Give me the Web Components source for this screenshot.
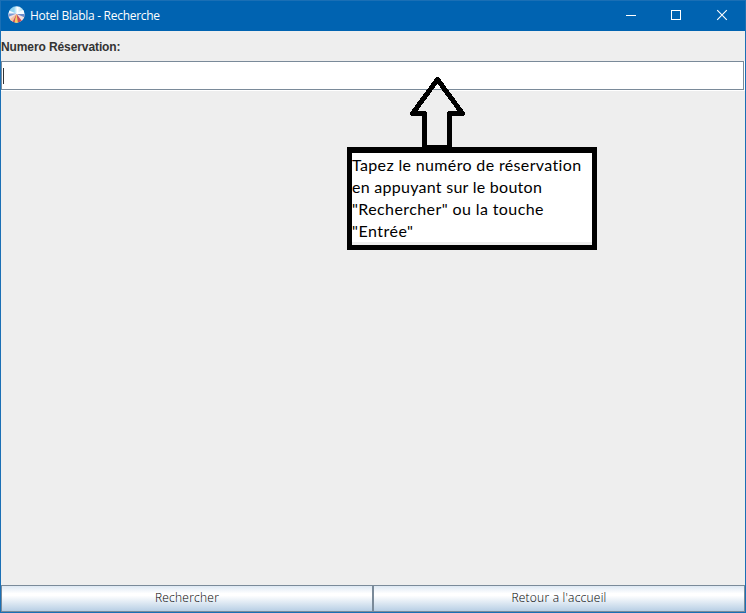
<!DOCTYPE html>
<html lang="fr">
<head>
<meta charset="utf-8">
<title>Hotel Blabla - Recherche</title>
<style>
html, body { margin: 0; height: 100%; overflow: hidden; }
help-callout span:nth-child(1) { letter-spacing: .35px; }
help-callout span:nth-child(2) { letter-spacing: .27px; }
help-callout span:nth-child(3) { letter-spacing: .4px; }
help-callout span:nth-child(4) { letter-spacing: .5px; }
</style>
</head>
<body>
<app-window>
  <title-bar slot="title">Hotel Blabla - Recherche</title-bar>
  <search-field>Numero Réservation:</search-field>
  <help-callout>
    <span>Tapez le numéro de réservation</span>
    <span>en appuyant sur le bouton</span>
    <span>"Rechercher" ou la touche</span>
    <span>"Entrée"</span>
  </help-callout>
  <metal-button slot="actions">Rechercher</metal-button>
  <metal-button slot="actions">Retour a l'accueil</metal-button>
</app-window>
<script>
function define(name, markup) {
  customElements.define(name, class extends HTMLElement {
    constructor() {
      super();
      this.attachShadow({ mode: "open" }).innerHTML = markup;
    }
  });
}

define("app-window", `
<style>
:host { display: flex; flex-direction: column; position: relative; box-sizing: border-box; width: 746px; height: 613px; border: 1px solid #1a6fb5; background: #eee; }
main { flex: 1; min-height: 0; }
footer { display: grid; grid-template-columns: 372px 372px; height: 27px; }
</style>
<slot name="title"></slot>
<main><slot></slot></main>
<footer><slot name="actions"></slot></footer>`);

define("title-bar", `
<style>
:host { display: flex; align-items: center; height: 30px; background: #0063b1; color: #fff; font: 12px/28px "Open Sans", "Noto Sans", sans-serif; }
.icon { width: 17px; height: 17px; margin: 0 5px 3px 7px; }
.label { flex: 1; letter-spacing: -.28px; white-space: nowrap; }
.controls { display: block; width: 138px; height: 30px; }
</style>
<svg class="icon" viewBox="0 0 17 17">
  <defs>
    <clipPath id="disc"><circle cx="8.5" cy="8.5" r="8.2"/></clipPath>
    <linearGradient id="sky"><stop offset="0" stop-color="#8fd0ee"/><stop offset=".35" stop-color="#8fd3f0"/><stop offset=".55" stop-color="#fff"/><stop offset=".75" stop-color="#c5e8f5"/><stop offset="1" stop-color="#8fcdec"/></linearGradient>
  </defs>
  <g clip-path="url(#disc)">
    <rect width="17" height="8" fill="url(#sky)"/>
    <path d="M0 4L8 7.5L16.5 3V9H0Z" fill="#f6fbff"/>
    <rect y="8" width="17" height="9" fill="#f1dedc"/>
    <path d="M0 7.5H8.5L0 11Z" fill="#7b9bd6"/>
    <path d="M8.5 8H17V11.5Z" fill="#6a8bcb"/>
    <path d="M8.5 8L1 14L4 17Z" fill="#f5c1a0"/>
    <path d="M8.5 8L4 17H7Z" fill="#cc5560"/>
    <path d="M8.5 8L6.5 17H10.5Z" fill="#f8cf5a"/>
    <path d="M8.5 8L10 17L14 15Z" fill="#c9505a"/>
  </g>
</svg>
<span class="label"><slot></slot></span>
<svg class="controls" viewBox="607 1 138 30" fill="none" stroke="#fff">
  <path d="M626 15.5H636M671.5 10.5H680.5V19.5H671.5Z" shape-rendering="crispEdges"/>
  <path d="M717.2 10.2L726.8 19.8M726.8 10.2L717.2 19.8" stroke-width="1.1"/>
</svg>`);

define("search-field", `
<style>
:host { display: block; }
label { display: block; height: 30px; font: bold 12px/32px "Liberation Sans", Arial, sans-serif; letter-spacing: -.1px; color: #333; white-space: nowrap; }
.field { box-sizing: border-box; height: 30px; border-right: 1px solid #fff; border-bottom: 1px solid #fff; }
.inner { box-sizing: border-box; height: 29px; border: 1px solid #7a8a99; background: #fff; padding: 6px 0 0 1px; }
.caret { width: 1px; height: 16px; background: #333; }
</style>
<label><slot></slot></label>
<div class="field"><div class="inner"><div class="caret"></div></div></div>`);

define("help-callout", `
<style>
:host { position: absolute; left: 346px; top: 75px; display: block; width: 250px; }
svg { display: block; width: 250px; height: 71px; }
.box { box-sizing: border-box; width: 250px; height: 103px; border: 5px solid #000; border-top-width: 6px; background: linear-gradient(#fff 0 89px, #eee 89px); padding-top: 1px; font: 16px/22px Lato, "Open Sans", sans-serif; color: #000; }
::slotted(span) { display: block; white-space: nowrap; }
</style>
<svg viewBox="347 76 250 71">
  <path d="M424.5 147V113.5H412.5L437.5 79.5L462.5 113.5H449.5V147" fill="#eee"/>
  <path d="M437.5 79L445 89H430Z" fill="#fff"/>
  <path d="M430 89.5H445" stroke="#7a8a99"/>
  <path d="M424.5 149V113.5H412.5L437.5 79.5L462.5 113.5H449.5V149M424 147.5H450" fill="none" stroke="#000" stroke-width="5" stroke-linejoin="round" shape-rendering="crispEdges"/>
</svg>
<div class="box"><slot></slot></div>`);

define("metal-button", `
<style>
:host { display: block; box-sizing: border-box; height: 27px; border: 1px solid #7a8a99; background: linear-gradient(#dde8f3 0, #fff 30%, #fff 38%, #b8cfe5 100%); color: #000; font: 300 12px/23px "Open Sans", "Noto Sans", sans-serif; letter-spacing: .23px; text-align: center; white-space: nowrap; }
</style>
<slot></slot>`);
</script>
</body>
</html>
